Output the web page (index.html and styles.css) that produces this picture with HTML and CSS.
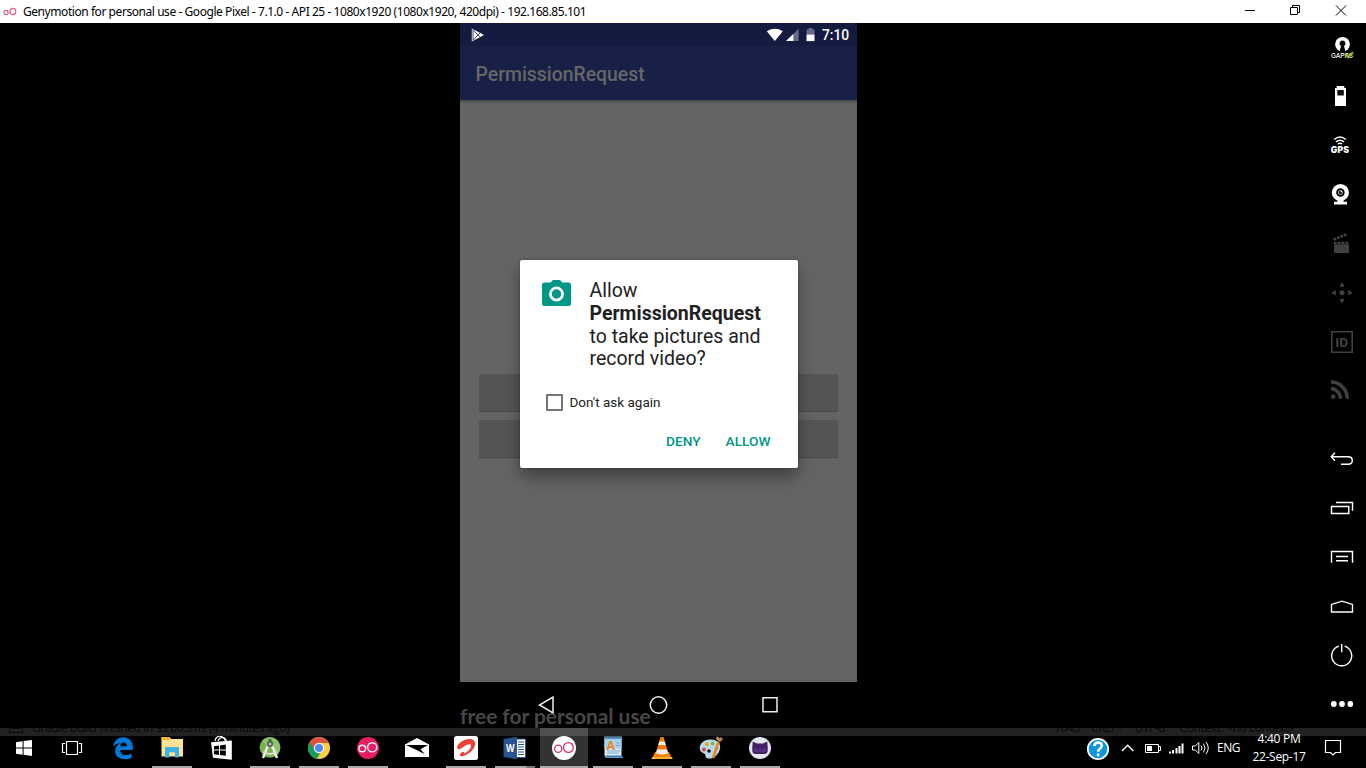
FILE: index.html
```html
<!DOCTYPE html>
<html lang="en">
<head>
<meta charset="utf-8">
<title>Genymotion</title>
<link rel="stylesheet" href="styles.css">
</head>
<body>
<header class="titlebar">
  <svg class="app-logo" width="14" height="10" viewBox="0 0 14 10" fill="none" stroke="#df5b84" stroke-width="1.2"><circle cx="3" cy="5.500" r="2.100"/><ellipse cx="9.800" cy="4.500" rx="2.900" ry="3.200"/></svg>
  <span class="window-title">Genymotion for personal use - Google Pixel - 7.1.0 - API 25 - 1080x1920 (1080x1920, 420dpi) - 192.168.85.101</span>
  <svg class="window-controls" width="146" height="23" viewBox="0 0 146 23" fill="none" stroke="#000" stroke-width="1"><path d="M25 10.500h10M70.500 7.500h7v7h-7zM72.500 7.500v-2h7v7h-2M116 5.500l10 10M126 5.500l-10 10"/></svg>
</header>

<main class="emulator">
  <section class="phone">
    <div class="status-bar">
      <svg width="14" height="14" viewBox="0 0 14 14"><path d="M.8.500l9 4.800 3.200 1.700-3.200 1.700-9 4.800z" fill="#fff"/><path d="M1.800 1.500l7.500 8M1.800 12.500l7.500-8M2 2v10" fill="none" stroke="#141a40" stroke-width=".8"/></svg>
      <svg class="signals" width="52" height="14" viewBox="0 0 52 14"><path d="M.8 3.200Q8.800-1.700 16.800 3.200L8.800 13z" fill="#fff"/><path d="M32.700.8v12.300H20z" fill="#676b88"/><path d="M20 13.100L27.300 6v7.100z" fill="#fff"/><path d="M42.500 0h4v1.500h2v5h-8v-5h2z" fill="#676b88"/><path d="M40.500 6.500h8v6.600h-8z" fill="#fff"/></svg>
      <span class="clock">7:10</span>
    </div>
    <div class="app-bar">PermissionRequest</div>
    <div class="app-content"><div class="app-button"></div><div class="app-button"></div></div>
    <div class="nav-bar">
      <svg width="20" height="20" viewBox="0 0 20 20"><path d="M16 2v16L2.500 10z"/></svg>
      <svg width="20" height="20" viewBox="0 0 20 20"><circle cx="9.500" cy="10" r="8.200"/></svg>
      <svg width="20" height="20" viewBox="0 0 20 20"><path d="M3 2.800h14v14H3z"/></svg>
    </div>
    <div class="watermark">free for personal use</div>

    <div class="dialog">
      <div class="dialog-head">
        <svg width="30" height="27" viewBox="0 0 30 27"><path d="M2.500 2.500h6L11 0h7l2.500 2.500h6Q29 2.500 29 5v18.500Q29 26 26.500 26h-24Q0 26 0 23.500V5Q0 2.500 2.500 2.500z" fill="#009688"/><circle cx="14.500" cy="14" r="6.100" fill="none" stroke="#fff" stroke-width="2.700"/></svg>
        <p>Allow<br><b>PermissionRequest</b><br>to take pictures and<br>record video?</p>
      </div>
      <label class="ask"><span class="box"></span>Don't ask again</label>
      <div class="actions"><span>DENY</span><span>ALLOW</span></div>
    </div>
  </section>

  <aside class="rail">
    <svg viewBox="0 0 49 49"><circle cx="25.500" cy="21.300" r="7.400" fill="#fff"/><path d="M25.500 17.500a3 3 0 0 1 1.500 5.600l1.800 6.500h-6.600l1.800-6.500a3 3 0 0 1 1.500-5.600z" fill="#000"/><text x="14" y="34.800" font-size="6.600" textLength="22" fill="#fff">GAPPS</text><path d="M28 31l3.200 3.300 4.800-5" fill="none" stroke="#8fbf1a" stroke-width="2"/></svg>
    <svg viewBox="0 0 49 49"><path d="M18 16h1.700v-2h7.600v2H29v18H18z" fill="#fff"/><path d="M20.300 18h6.500v5.500h-6.500z" fill="#111"/></svg>
    <svg viewBox="0 0 49 49"><g fill="none" stroke="#fff" stroke-width="1.500"><path d="M17.200 18.500q5.800-5 11.600 0M19 20.900q4-3.300 8 0M21 23q2-1.600 4 0"/></g><text class="gps" x="13.800" y="31.700" font-size="8.600" textLength="18.200" fill="#fff">GPS</text></svg>
    <svg viewBox="0 0 49 49"><circle cx="23.400" cy="22.500" r="8.600" fill="#fff"/><circle cx="23.400" cy="22.500" r="3.300" fill="#fff" stroke="#000" stroke-width="1.900"/><circle cx="23.400" cy="22.500" r="1.700" fill="#111"/><circle cx="24.300" cy="21.600" r=".8" fill="#fff"/><path d="M20.500 30h6v1.800H30v2.600H17v-2.600h3.500z" fill="#fff"/></svg>
    <svg viewBox="0 0 49 49"><path d="M17 25.500h15V34H17z" fill="#40403c"/><path d="M17 24.200h15M16.500 20.600L30 15.200" stroke="#40403c" stroke-width="2.800" stroke-dasharray="2.800 .9"/></svg>
    <svg viewBox="0 0 49 49"><g fill="#40403c"><circle cx="25" cy="24.800" r="2.500"/><path d="M25 14.200l2.700 4.600h-5.400zM25 35.500l2.700-4.600h-5.400zM14.200 24.800l4.600-2.700v5.400zM35.800 24.800l-4.600-2.700v5.400z"/></g></svg>
    <svg viewBox="0 0 49 49"><path d="M14.800 14.800h20.400v20.400H14.800z" fill="none" stroke="#40403c" stroke-width="1.600"/><text class="id" x="18.200" y="30" font-size="13.500" fill="#40403c">ID</text></svg>
    <svg viewBox="0 0 49 49"><g fill="none" stroke="#40403c" stroke-width="3.500"><path d="M14 15.800a17 17 0 0 1 16.300 16.900M14 22.600a10.100 10.100 0 0 1 9.400 10.100"/></g><circle cx="16.200" cy="30.600" r="2.300" fill="#40403c"/></svg>
    <svg class="group" viewBox="0 0 49 49"><path class="line" d="M18 18.800l-3.800 4 3.800 4M14.500 22.800H31q4.300 0 4.300 3.600T31 30.200h-7"/></svg>
    <svg viewBox="0 0 49 49"><path class="line" d="M14.500 23.500h17.300v7H14.500zM19 19.500h16.500v8.200"/></svg>
    <svg viewBox="0 0 49 49"><path class="line" d="M14.500 30.800V19.500h21v11.300M19 24.500h12M19 28.800h12"/></svg>
    <svg viewBox="0 0 49 49"><path class="line" d="M14.500 31v-7.600L25 20.200l10.500 3.200V31z"/></svg>
    <svg viewBox="0 0 49 49"><path class="line" d="M21.800 16.200a10 10 0 1 0 5.800 0M24.700 14v8.300"/></svg>
    <svg viewBox="0 0 49 49"><g fill="#fff"><circle cx="16.800" cy="25" r="2.900"/><circle cx="25" cy="25" r="2.900"/><circle cx="33.300" cy="25" r="2.900"/></g></svg>
  </aside>
</main>

<footer class="taskbar">
  <div class="behind">
    <svg width="14" height="8" viewBox="0 0 14 8" fill="none" stroke="#080808"><path d="M.5 0v4.500h13V0M2 .5h10"/></svg>
    <span class="build">Gradle build finished in 9s 605ms (4 minutes ago)</span>
    <span class="context">1043&nbsp;&nbsp;&nbsp; CRLF÷&nbsp;&nbsp;&nbsp; UTF-8÷&nbsp;&nbsp; Context: &lt;no context&gt;</span>
  </div>
  <nav class="apps">
    <div class="item"><svg viewBox="0 0 24 24" fill="#fff"><path d="M4 6.200l6.600-.9v6.200H4zM11.600 5.100l8.400-1.100v7.500h-8.400zM4 12.500h6.600v6.200L4 17.800zM11.600 12.500H20V20l-8.400-1.200z"/></svg></div>
    <div class="item view"><svg viewBox="0 0 24 24" fill="none" stroke="#fff" stroke-width="1.200"><path d="M6.500 5.500h11v13h-11zM5 7.500H2.500v9H5M19 7.500h2.500v9H19"/></svg></div>
    <div class="item edge"><svg viewBox="0 0 24 24"><path d="M2 10.600C3 4.600 7 1.200 12.200 1.200c6 0 9.600 4.300 9.600 10V14H9c.2 3.700 3.200 5 6.300 5 2 0 3.800-.6 5.300-1.500v4.200a14 14 0 0 1-7 1.500C7.500 23.200 4.100 19.500 4.100 15c0-3.800 2.200-6.500 5.400-8C6 7.300 3.400 9 2 10.600zM9.200 10.300h6.700c0-2.500-1.200-3.900-3.200-3.900S9.500 7.800 9.200 10.300z" fill="#0078d7"/></svg></div>
    <div class="item open"><svg viewBox="0 0 24 24"><path d="M1.500 1h8l1.500 2h12v17.500H1.500z" fill="#ffe394"/><path d="M1.500 1h8l1 1.500-1 1.500h-8z" fill="#f3b928"/><path d="M5 21.500V11h14v10.500h-4V16.300H9.300v5.200z" fill="#3fb2e5"/></svg></div>
    <div class="item"><svg viewBox="0 0 24 24"><path d="M6 5Q7-.2 11.700.300q3.300.4 4.600 4.500M9 5Q10 1.500 13.500 1.300q2.800.2 4 3.700" fill="none" stroke="#fff" stroke-width="1.200"/><path d="M2 6.300L22.800 4.500v19.300L4 21.700z" fill="#fff"/><path d="M5 10.200l5-.7v4H5zM11 9.400l5.800-.8v4.900H11zM5 14.500h5v4.400l-5-.7zM11 14.500h5.800v5.200l-5.800-.8z" fill="#000"/></svg></div>
    <div class="item open"><svg viewBox="0 0 24 24"><circle cx="12" cy="11.300" r="10.400" fill="#78b64a"/><path d="M4 5a10.400 10.400 0 0 1 16.200 13z" fill="#8fc66a"/><path d="M10.500 8L5 22M13.500 8L19 22" stroke="#eee" stroke-width="2.500"/><path d="M5.500 15.500q6.500 5 13 0" fill="none" stroke="#dedede" stroke-width="2"/><circle cx="12" cy="8" r="3.200" fill="#5d6863"/><circle cx="12" cy="8" r="1.300" fill="#b4c5b0"/><path d="M12 3.200v2" stroke="#4c5752" stroke-width="3"/></svg></div>
    <div class="item open"><svg viewBox="0 0 24 24"><circle cx="12" cy="12" r="11" fill="#ffce43"/><path d="M12 12L2.500 6.500a11 11 0 0 0 7.500 16.300l4.500-8z" fill="#159b5b"/><path d="M2.500 6.500A11 11 0 0 1 21.600 7H12l-3 8z" fill="#dd5144"/><circle cx="12" cy="12" r="5.200" fill="#f4f4f4"/><circle cx="12" cy="12" r="4" fill="#4c8bf5"/></svg></div>
    <div class="item open"><svg viewBox="0 0 24 24"><circle cx="12" cy="12" r="11" fill="#e91d63"/><g fill="none" stroke="#fff" stroke-width="1.400"><circle cx="6.300" cy="12.500" r="3.300"/><circle cx="16.200" cy="11.300" r="4.600"/></g></svg></div>
    <div class="item"><svg viewBox="0 0 24 24"><path d="M0 8.500L12 2l12 6.500V21H0z" fill="#fff"/><path d="M1 9h22l-7.500 4.300 4.500 5-10-5z" fill="#000"/></svg></div>
    <div class="item open"><svg viewBox="0 0 24 24"><rect width="24" height="24" rx="2.500" fill="#fff"/><path d="M3.300 12.500C2 8 10 3 15.500 3c6.500 0 7.500 6.500 2.500 11.500-4 4-8 6-10.500 5.800-3-.4-1.300-3 .4-4 1.600-1.300 3.100-.3 1.800 1.400 4-1.500 7.300-5 7.300-8 0-2.300-3-2-6.500.4-3 2.300-5.600 4.500-7.200 2.400z" fill="#ed4036"/></svg></div>
    <div class="item open stacked"><svg viewBox="0 0 24 24"><path d="M10 3h12.500v18.500H10z" fill="#fff" stroke="#285293"/><path d="M15 6h6M15 8.500h6M15 11h6M15 13.500h6M15 16h6M15 18.500h6" stroke="#285293" stroke-width="1.200"/><path d="M.5 3l13.500-2.300v22.500L.5 21z" fill="#285293"/><text class="word" x="3" y="16" font-size="10" textLength="8.500" lengthAdjust="spacingAndGlyphs" fill="#fff">W</text></svg></div>
    <div class="item open active"><svg viewBox="0 0 24 24"><circle cx="12" cy="12" r="12" fill="#fff"/><g fill="none" stroke="#d73670" stroke-width="1.300"><circle cx="6.200" cy="12.800" r="3.600"/><circle cx="16.400" cy="11.500" r="4.900"/></g></svg></div>
    <div class="item open"><svg viewBox="0 0 24 24"><path d="M3.500.8h17v19l1.500 2H5l-1.500-2z" fill="#d5eaf7"/><path d="M3.500.8h17v12h-17z" fill="#a5d2ef"/><path d="M3.500.8h17v2h-17z" fill="#477fad"/><path d="M6 17h12M15 7h4M15 9.500h4M6 15h13" stroke="#7fa9c9"/><path d="M4 19.500h17l1 2H6z" fill="#3b7bb5"/><text class="write" x="5.500" y="13.500" font-size="12.500" fill="#f58220">A</text></svg></div>
    <div class="item open"><svg viewBox="0 0 24 24"><path d="M5 16h14l3 7H2z" fill="#f58410"/><path d="M10.500 1h3l5 17q-6.500 3.500-13 0z" fill="#f07b0e"/><path d="M9.300 5.500h5.500l1 3.500H8.200zM7 13.500h10l1 3.700q-6 2.600-12 0z" fill="#eee"/><path d="M2 21h20l.6 2H1.400z" fill="#ffac2f"/></svg></div>
    <div class="item open"><svg viewBox="0 0 24 24"><path d="M.8 13C0 7 6 3 12 3.500c7 0 11 5 8.500 11-2 5-6 8.500-11 8-4 0-2.500-3.500-3.500-4.500-2-1-4.700-2-5.200-5z" fill="#b9daea"/><circle cx="5" cy="13.500" r="2" fill="#d84b42"/><circle cx="8" cy="8.300" r="2" fill="#eba22c"/><circle cx="13.500" cy="7.500" r="2" fill="#7dbb43"/><circle cx="10" cy="15" r="1.800" fill="#111"/><circle cx="17.500" cy="12" r="1.800" fill="#3d86c3"/><path d="M19.500 6l-5.500 16" stroke="#e68b25" stroke-width="2.800"/><path d="M17.500 1.500l3.500 3M20 5l3-3" stroke="#b98857" stroke-width="3"/></svg></div>
    <div class="item open"><svg viewBox="0 0 24 24"><circle cx="12" cy="12" r="11" fill="#e3e5f1"/><path d="M4.800 5.600L9 7.500h6l4.200-1.900.5 5.400v3.500q0 3.500-3.700 3.500H8q-3.700 0-3.700-3.500V11z" fill="#442065"/><path d="M6 12.500h12V16H6z" fill="#542f82"/></svg></div>
  </nav>
  <div class="tray">
    <svg class="help" width="24" height="24" viewBox="0 0 24 24"><circle cx="12" cy="12" r="10.200" fill="#1296db" stroke="#fff" stroke-width="1.800"/><path d="M8.300 9.200q.3-3.700 4-3.700 3.500.3 3.500 3.200c0 2.700-3.700 2.800-3.700 6M12.100 16.500v2.700" fill="none" stroke="#fff" stroke-width="2.500"/></svg>
    <svg class="status" width="90" height="20" viewBox="0 0 90 20" fill="none" stroke="#fff"><path d="M1 13l5.700-5.700 5.700 5.700" stroke-width="1.400"/><path d="M24.500 6.500h13v8h-13zM37.500 8.500h2v4h-2"/><path d="M26 8h5v5h-5z" fill="#fff" stroke="none"/><path d="M49 15.500v-2M52 15.500V12M55.500 15.500V10M58.500 15.500V8M61.500 15.500V5.500" stroke-width="2"/><path d="M71.500 8h2.800l3.500-3.500v11L74.300 12h-2.800zM80 7.500q2 2.500 0 5M82.500 5.700q3 4.300 0 8.600M85 4q4.500 6 0 12"/></svg>
    <span class="lang">ENG</span>
    <span class="time">4:40 PM<br>22-Sep-17</span>
    <svg class="note" width="18" height="18" viewBox="0 0 18 18" fill="none" stroke="#fff" stroke-width="1.200"><path d="M1.500 1.500h15v12h-5L9 16l-2.500-2.500h-5z"/></svg>
  </div>
</footer>
</body>
</html>
```
FILE: styles.css
```css
* { box-sizing: border-box; }
body { margin: 0; width: 1366px; height: 768px; overflow: hidden; background: #000; display: flex; flex-direction: column; font-family: "Open Sans", sans-serif; }
svg { display: block; flex: none; }

.titlebar { height: 23px; flex: none; background: #fff; display: flex; align-items: center; color: #000; }
.app-logo { margin-left: 3px; }
.window-title { margin-left: 6px; font-family: "Noto Sans", sans-serif; font-size: 12px; letter-spacing: -0.44px; white-space: nowrap; line-height: 22px; }
.window-controls { margin-left: auto; }

.emulator { height: 705px; flex: none; display: flex; justify-content: space-between; }
.phone { position: relative; width: 397px; margin-left: 460px; display: flex; flex-direction: column; font-family: Roboto, sans-serif; }
.status-bar { height: 23px; background: #141a40; display: flex; align-items: center; padding: 0 8px 0 11px; }
.signals { margin-left: auto; }
.clock { color: #fff; font-size: 13.8px; font-weight: 500; margin-left: 4px; width: 27px; padding-top: 1px; white-space: nowrap; }
.app-bar { height: 54px; line-height: 57px; background: #192048; color: #666; font-size: 19.4px; font-weight: 500; padding-left: 15.5px; }
.app-content { height: 582px; background: #646464; box-shadow: inset 0 3px 2px -1px #4b4b4b; padding: 273.5px 19px 0 18.5px; display: flex; flex-direction: column; gap: 9px; }
.app-button { height: 37px; background: #555; border-radius: 2px; box-shadow: 0 1px 1px #484848; }
.nav-bar { height: 46px; display: flex; justify-content: space-between; align-items: center; padding: 0 77px; }
.nav-bar svg { fill: none; stroke: #eee; stroke-width: 1.5; }
.watermark { position: absolute; left: 0; bottom: -1px; color: rgba(115, 115, 115, .65); font: bold 20.900px/26px Lato, sans-serif; white-space: nowrap; }

.dialog { position: absolute; left: 59.5px; top: 236.5px; width: 278px; height: 208.5px; background: #fff; border-radius: 2px; box-shadow: 0 9px 16px rgba(0, 0, 0, .35), 0 0 3px rgba(0, 0, 0, .25); color: #212121; padding: 20.500px 22px 0; }
.dialog-head { display: flex; gap: 18px; }
.dialog-head p { margin: 0; font-size: 19.500px; line-height: 22.8px; white-space: nowrap; }
.ask { display: flex; align-items: center; gap: 7px; margin: 22px 0 0 4px; height: 18px; font-size: 13.5px; }
.box { width: 17px; height: 17px; border: 2px solid #757575; border-radius: 1px; }
.actions { display: flex; justify-content: flex-end; gap: 25px; margin-top: 21px; padding-right: 5px; color: #009688; font-size: 13.7px; font-weight: 500; line-height: 18px; }

.rail { width: 49px; display: flex; flex-direction: column; }
.rail svg { width: 49px; height: 49px; }
.rail .group { margin-top: 19px; }
.rail text { font-family: Inter, sans-serif; font-weight: 500; }
.rail .gps { font-weight: 900; }
.rail .id { font-family: Roboto, sans-serif; font-weight: 700; }
.line { fill: none; stroke: #fff; stroke-width: 1.4; }

.taskbar { position: relative; height: 40px; flex: none; display: flex; background: linear-gradient(#222 8px, #000 8px); }
.behind { position: absolute; left: 9px; right: 25px; top: 0; height: 8px; overflow: hidden; display: flex; color: #080808; font-size: 12px; line-height: 14px; letter-spacing: -0.37px; white-space: nowrap; }
.behind span { margin-top: -7px; }
.build { margin-left: 9px; }
.context { margin-left: auto; width: 287px; }
.apps { position: relative; display: flex; gap: 1px; }
.item { width: 48px; height: 40px; padding: 8px 12px 0; }
.item svg { width: 24px; height: 24px; }
.item.view { margin-left: -1px; }
.item.edge { margin-left: 2px; }
.open { background: linear-gradient(#aaaaa6, #aaaaa6) 4px 38px / 40px 2px no-repeat; }
.stacked { background-image: linear-gradient(90deg, #aaaaa6 31px, #777 31px); }
.active { background-color: #333; background-size: 48px 2px; background-position: 0 38px; box-shadow: inset 0 8px #505050; }
.word, .write { font-family: "Open Sans", sans-serif; font-weight: 700; }
.tray { position: relative; margin-left: auto; display: flex; color: #fff; font-size: 12px; white-space: nowrap; }
.help { margin: 9px 11px 0 0; }
.status { margin-top: 10px; }
.lang { width: 26px; margin: 11px 0 0 6px; line-height: 18px; letter-spacing: -0.5px; }
.time { width: 60px; margin: 2px 0 0 6px; text-align: center; line-height: 18px; letter-spacing: -0.3px; }
.note { margin: 11px 24px 0 15px; }
```
